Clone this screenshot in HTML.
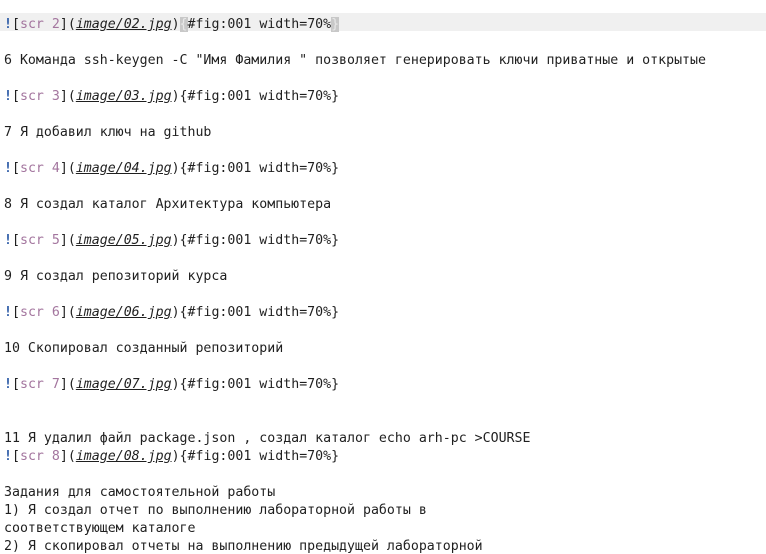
<!DOCTYPE html>
<html><head><meta charset="utf-8"><style>
html,body{margin:0;padding:0;background:#fff;width:766px;height:547px;overflow:hidden}
.ed{position:absolute;top:13px;left:0;right:0;font-family:"DejaVu Sans Mono","Liberation Mono",monospace;font-size:13.25px;color:#1f1f1f}
.l{height:18px;line-height:18px;padding-left:4px;white-space:pre;position:relative}
.l>i.t{position:relative;top:3px;font-style:normal}
.cur{background:#f0f0f0}
.b{color:#2f5da8;font-weight:bold}
.p{color:#a3759e}
.u{font-style:italic;text-decoration:underline}
.br{background:#c8c8c8;color:#e8e8e8}
</style></head><body><div class="ed">
<div class="l cur"><i class="t"><span class="b">!</span>[<span class="p">scr 2</span>](<span class="u">image/02.jpg</span>)<span class="br">{</span>#fig:001 width=70%<span class="br">}</span></i></div>
<div class="l"></div>
<div class="l"><i class="t">6 Команда ssh-keygen -C "Имя Фамилия " позволяет генерировать ключи приватные и открытые</i></div>
<div class="l"></div>
<div class="l"><i class="t"><span class="b">!</span>[<span class="p">scr 3</span>](<span class="u">image/03.jpg</span>){#fig:001 width=70%}</i></div>
<div class="l"></div>
<div class="l"><i class="t">7 Я добавил ключ на github</i></div>
<div class="l"></div>
<div class="l"><i class="t"><span class="b">!</span>[<span class="p">scr 4</span>](<span class="u">image/04.jpg</span>){#fig:001 width=70%}</i></div>
<div class="l"></div>
<div class="l"><i class="t">8 Я создал каталог Архитектура компьютера</i></div>
<div class="l"></div>
<div class="l"><i class="t"><span class="b">!</span>[<span class="p">scr 5</span>](<span class="u">image/05.jpg</span>){#fig:001 width=70%}</i></div>
<div class="l"></div>
<div class="l"><i class="t">9 Я создал репозиторий курса</i></div>
<div class="l"></div>
<div class="l"><i class="t"><span class="b">!</span>[<span class="p">scr 6</span>](<span class="u">image/06.jpg</span>){#fig:001 width=70%}</i></div>
<div class="l"></div>
<div class="l"><i class="t">10 Скопировал созданный репозиторий</i></div>
<div class="l"></div>
<div class="l"><i class="t"><span class="b">!</span>[<span class="p">scr 7</span>](<span class="u">image/07.jpg</span>){#fig:001 width=70%}</i></div>
<div class="l"></div>
<div class="l"></div>
<div class="l"><i class="t">11 Я удалил файл package.json , создал каталог echo arh-pc &gt;COURSE</i></div>
<div class="l"><i class="t"><span class="b">!</span>[<span class="p">scr 8</span>](<span class="u">image/08.jpg</span>){#fig:001 width=70%}</i></div>
<div class="l"></div>
<div class="l"><i class="t">Задания для самостоятельной работы</i></div>
<div class="l"><i class="t">1) Я создал отчет по выполнению лабораторной работы в</i></div>
<div class="l"><i class="t">соответствующем каталоге</i></div>
<div class="l"><i class="t">2) Я скопировал отчеты на выполнению предыдущей лабораторной</i></div>
</div></body></html>
